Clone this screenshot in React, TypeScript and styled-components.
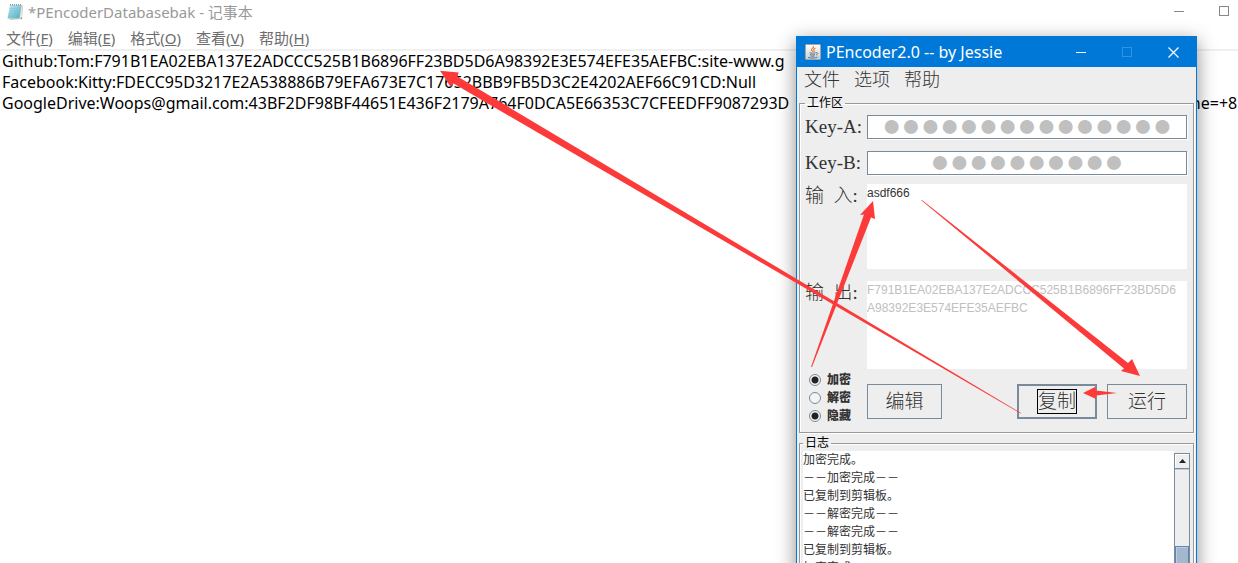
import React from "react";
import styled, { createGlobalStyle, css } from "styled-components";

const Global = createGlobalStyle`
  * { box-sizing: border-box; }
  html, body, #root { height: 100%; }
  body { margin: 0; background: #fff; overflow: hidden; }
  button, input, textarea { margin: 0; }
`;

const ui = `"Noto Sans", "Noto Sans CJK SC", sans-serif`;
const song = `"Liberation Serif", "Noto Sans CJK SC", serif`;
const plain = `"Liberation Sans", "Noto Sans CJK SC", sans-serif`;

const Desktop = styled.div`
  position: relative;
  height: 100%;
  overflow: hidden;
`;

const Notepad = styled.main`
  display: flex;
  flex-direction: column;
  height: 100%;
  background: #fff;
  font-family: ${ui};
`;

const NoteTitleBar = styled.header`
  display: flex;
  flex: none;
  align-items: center;
  gap: 5px;
  height: 23px;
  padding: 0 8px 0 7px;
  color: #999;
  font-size: 15px;
  line-height: 22px;
  white-space: nowrap;
`;

const WindowControls = styled.div<{ $gap: number }>`
  display: flex;
  align-items: center;
  gap: ${(p) => p.$gap}px;
  margin-left: auto;
`;

const WindowButton = styled.button<{ $color: string }>`
  display: flex;
  padding: 0;
  border: 0;
  background: none;
  color: ${(p) => p.$color};
`;

const NoteMenu = styled.nav`
  display: flex;
  flex: none;
  gap: 15px;
  height: 28px;
  padding: 4px 6px 0;
  border-bottom: 2px solid #f0f0f0;
`;

const NoteMenuItem = styled.button`
  padding: 0;
  border: 0;
  background: none;
  color: #6d6d6d;
  font-family: ${ui};
  font-size: 15px;
  line-height: 22px;
  white-space: nowrap;
`;

const NoteText = styled.textarea`
  flex: 1;
  width: 100%;
  padding: 0 2px;
  border: 0;
  outline: 0;
  resize: none;
  overflow: hidden;
  color: #000;
  background: transparent;
  font-family: ${ui};
  font-size: 16px;
  line-height: 21px;
  white-space: pre;
`;

const Encoder = styled.section`
  position: absolute;
  top: 36px;
  right: 41px;
  display: flex;
  flex-direction: column;
  width: 401px;
  height: 100%;
  border: 1px solid #0078d7;
  background: #eee;
  box-shadow: 0 5px 18px rgba(0, 0, 0, 0.45);
  color: #333;
`;

const EncoderTitleBar = styled.header`
  display: flex;
  flex: none;
  align-items: center;
  gap: 5px;
  height: 30px;
  padding: 0 17px 0 8px;
  background: #0078d7;
  color: #fff;
  font-family: ${ui};
  font-size: 16px;
  line-height: 28px;
  white-space: nowrap;
`;

const EncoderMenu = styled.nav`
  display: flex;
  flex: none;
  align-items: flex-start;
  gap: 14px;
  height: 29px;
  padding: 0 7px;
`;

const EncoderMenuItem = styled.button`
  padding: 0;
  border: 0;
  background: none;
  color: #333;
  font-family: ${song};
  font-size: 18px;
  font-weight: 300;
  line-height: 26px;
`;

const Group = styled.fieldset`
  flex: none;
  min-width: 0;
  margin: 0 2px 3px;
  border: 1px solid #999;
  box-shadow: 1px 1px 0 #fff, inset 1px 1px 0 #fff;
`;

const WorkGroup = styled(Group)`
  padding: 5px 6px 7px 5px;
`;

const LogGroup = styled(Group)`
  padding: 1px 3px 3px;
`;

const Legend = styled.legend`
  padding: 0 2px;
  color: #000;
  font-family: ${plain};
  font-size: 12px;
  line-height: 14px;
`;

const Form = styled.form`
  display: grid;
  grid-template-columns: 62px 1fr;
  grid-template-rows: 36px 33px 97px 90px auto;
  align-items: start;
`;

const Label = styled.label`
  font-family: ${song};
  font-size: 19px;
  font-weight: 300;
  line-height: 23px;
  white-space: pre;
`;

const KeyInput = styled.input`
  width: 100%;
  height: 24px;
  padding: 0 0 3px;
  border: 1px solid #7a8a99;
  outline: 0;
  background: #fff;
  box-shadow: 1px 1px 0 #fff;
  color: #c0c0c0;
  font-family: ${plain};
  font-size: 32px;
  line-height: 19px;
  text-align: center;
`;

const TextBox = styled.textarea<{ $muted?: boolean }>`
  display: block;
  width: 100%;
  height: ${(p) => (p.$muted ? 88 : 85)}px;
  padding: 0;
  border: 0;
  outline: 0;
  resize: none;
  overflow: hidden;
  background: #fff;
  color: ${(p) => (p.$muted ? "#c0c0c0" : "#333")};
  font-family: ${plain};
  font-size: 12px;
  line-height: 18px;
  word-break: break-all;
`;

const Modes = styled.div`
  display: flex;
  flex-direction: column;
`;

const Mode = styled.label`
  display: flex;
  align-items: center;
  gap: 6px;
  height: 18px;
  padding-left: 4px;
  font-family: ${plain};
  font-size: 12px;
  font-weight: 900;
  line-height: 18px;
  white-space: nowrap;
`;

const Radio = styled.input`
  appearance: none;
  width: 12px;
  height: 12px;
  border: 1px solid #7a8a99;
  border-radius: 50%;
  background: #f4f4f4;

  &:checked {
    background: radial-gradient(circle, #222 3px, #f4f4f4 4px);
  }
`;

const Actions = styled.div`
  display: flex;
  gap: 10px;
  padding-top: 13px;
`;

const ActionButton = styled.button<{ $focused?: boolean; $first?: boolean }>`
  display: flex;
  align-items: center;
  justify-content: center;
  width: ${(p) => (p.$first ? 75 : 80)}px;
  height: 35px;
  padding: 0;
  border: ${(p) => (p.$focused ? 2 : 1)}px solid #7a8a99;
  background: #eee;
  color: #333;
  font-family: ${song};
  font-size: 19px;
  font-weight: 300;
  line-height: 23px;
  ${(p) => p.$first && css`margin-right: auto;`}
`;

const FocusMark = styled.span`
  border: 1px solid #000;
`;

const LogBody = styled.div`
  display: flex;
`;

const Log = styled.textarea`
  flex: 1;
  height: 180px;
  padding: 0;
  border: 0;
  outline: 0;
  resize: none;
  overflow: hidden;
  background: #fff;
  color: #333;
  font-family: ${plain};
  font-size: 12px;
  line-height: 18px;
  white-space: pre;
`;

const ScrollBar = styled.div`
  display: flex;
  flex-direction: column;
  width: 16px;
  margin-top: 2px;
  border: 1px solid #7a8a99;
  background: #eee;
`;

const ScrollUp = styled.button`
  display: flex;
  align-items: center;
  justify-content: center;
  height: 15px;
  margin-bottom: 77px;
  padding: 0;
  border: 0;
  border-bottom: 1px solid #7a8a99;
  background: #eee;
  box-shadow: inset 1px 1px 0 #fff, 0 1px 0 #b8cfe5;
`;

const Thumb = styled.div`
  flex: 1;
  border: 1px solid #6382bf;
  background: #a3b8cc;
  box-shadow: inset 1px 1px 0 #b8cfe5;
`;

const Arrows = styled.svg`
  position: absolute;
  top: 0;
  right: 0;
  pointer-events: none;
`;

const Glyph = ({ kind }: { kind: "min" | "max" | "close" }) => (
  <svg width="11" height="11" viewBox="0 0 11 11" fill="none" stroke="currentColor">
    {kind === "min" && <path d="M0 5.5h10" />}
    {kind === "max" && <rect x="0.5" y="0.5" width="9" height="9" />}
    {kind === "close" && <path d="M0.5 0.5l10 10M10.5 0.5l-10 10" strokeWidth="1.2" />}
  </svg>
);

const NotepadIcon = () => (
  <svg width="16" height="17" viewBox="0 0 16 17">
    <defs>
      <linearGradient id="sheet" x1="0" y1="0" x2="1" y2="1">
        <stop offset="0" stopColor="#c4edf5" />
        <stop offset="1" stopColor="#48a9c0" />
      </linearGradient>
    </defs>
    <path d="M4 2.5h11.5l-.5 13.5-12 .5z" fill="#9b8a68" />
    <path d="M3 2h12v12l-2 2H1z" fill="#e9e6d5" />
    <path d="M3 2h11.5L12.5 15.5H.5z" fill="url(#sheet)" />
    <path d="M3 5.5h11M2.6 8h11M2.2 10.5h11M1.8 13h11" stroke="#7ac5d5" strokeWidth=".6" />
    <path d="M3.5 1v1.5M5.5 1v1.5M7.5 1v1.5M9.5 1v1.5M11.5 1v1.5M13.5 1v1.5" stroke="#8a989c" />
  </svg>
);

const JavaIcon = () => (
  <svg width="16" height="16" viewBox="0 0 16 16">
    <defs>
      <linearGradient id="tile" x1="0" y1="0" x2="0" y2="1">
        <stop offset="0" stopColor="#fff" />
        <stop offset="1" stopColor="#c9cdd1" />
      </linearGradient>
    </defs>
    <rect x=".5" y=".5" width="15" height="15" rx="1" fill="url(#tile)" stroke="#a9a49e" />
    <path d="M8.5 2c1 2-3 2.8-2 4.3.4.7 1 1 1.2 1.5M10.5 4c-1.500.8-2.5 1.5-1.5 2.6.5.6.2 1-.2 1.4" fill="none" stroke="#e8772a" strokeWidth="1.1" />
    <path d="M4.500 8.7c1.5.7 4.5.6 6 0M5 10.5c1.5.6 3.5.6 5 0M5.5 12c1.2.4 2.8.4 4 0M3 13.3c2.5 1.1 7 1.1 9.5-.2M10.8 8.7c2.500-.6 2.3 1.6.2 2.4" fill="none" stroke="#426c94" strokeWidth=".9" />
  </svg>
);

const noteLines = [
  "Github:Tom:F791B1EA02EBA137E2ADCCC525B1B6896FF23BD5D6A98392E3E574EFE35AEFBC:site-www.g",
  "Facebook:Kitty:FDECC95D3217E2A538886B79EFA673E7C17652BBB9FB5D3C2E4202AEF66C91CD:Null",
  "GoogleDrive:Woops@gmail.com:43BF2DF98BF44651E436F2179A764F0DCA5E66353C7CFEEDFF9087293D   8A41C07E52B9D6F3A7E1:site-drive.google.com,phone=+8",
].join("\n");

const logLines = [
  "加密完成。",
  "－－加密完成－－",
  "已复制到剪辑板。",
  "－－解密完成－－",
  "－－解密完成－－",
  "已复制到剪辑板。",
  "加密完成。",
].join("\n");

const noteMenus = [
  ["文件", "F"],
  ["编辑", "E"],
  ["格式", "O"],
  ["查看", "V"],
  ["帮助", "H"],
];

const modes = [
  { name: "加密", group: "direction", on: true },
  { name: "解密", group: "direction", on: false },
  { name: "隐藏", group: "visibility", on: true },
];

export default function App() {
  return (
    <Desktop>
      <Global />
      <Notepad>
        <NoteTitleBar>
          <NotepadIcon />
          *PEncoderDatabasebak - 记事本
          <WindowControls $gap={34}>
            <WindowButton $color="#888" aria-label="最小化"><Glyph kind="min" /></WindowButton>
            <WindowButton $color="#888" aria-label="最大化"><Glyph kind="max" /></WindowButton>
          </WindowControls>
        </NoteTitleBar>
        <NoteMenu>
          {noteMenus.map(([name, key]) => (
            <NoteMenuItem key={key}>{name}(<u>{key}</u>)</NoteMenuItem>
          ))}
        </NoteMenu>
        <NoteText aria-label="文本" defaultValue={noteLines} spellCheck={false} />
      </Notepad>

      <Encoder>
        <EncoderTitleBar>
          <JavaIcon />
          PEncoder2.0 -- by Jessie
          <WindowControls $gap={35}>
            <WindowButton $color="#fff" aria-label="最小化"><Glyph kind="min" /></WindowButton>
            <WindowButton $color="#3393df" aria-label="最大化" disabled><Glyph kind="max" /></WindowButton>
            <WindowButton $color="#fff" aria-label="关闭"><Glyph kind="close" /></WindowButton>
          </WindowControls>
        </EncoderTitleBar>
        <EncoderMenu>
          <EncoderMenuItem>文件</EncoderMenuItem>
          <EncoderMenuItem>选项</EncoderMenuItem>
          <EncoderMenuItem>帮助</EncoderMenuItem>
        </EncoderMenu>
        <WorkGroup>
          <Legend>工作区</Legend>
          <Form>
            <Label htmlFor="key-a">Key-A:</Label>
            <KeyInput id="key-a" defaultValue={"●".repeat(15)} />
            <Label htmlFor="key-b">Key-B:</Label>
            <KeyInput id="key-b" defaultValue={"●".repeat(10)} />
            <Label htmlFor="source">{"输  入:"}</Label>
            <TextBox id="source" defaultValue="asdf666" spellCheck={false} />
            <Label htmlFor="result">{"输  出:"}</Label>
            <TextBox
              id="result"
              $muted
              readOnly
              spellCheck={false}
              value={"F791B1EA02EBA137E2ADCCC525B1B6896FF23BD5D6\nA98392E3E574EFE35AEFBC"}
            />
            <Modes>
              {modes.map((m) => (
                <Mode key={m.name}>
                  <Radio type="radio" name={m.group} defaultChecked={m.on} />
                  {m.name}
                </Mode>
              ))}
            </Modes>
            <Actions>
              <ActionButton type="button" $first>编辑</ActionButton>
              <ActionButton type="button" $focused><FocusMark>复制</FocusMark></ActionButton>
              <ActionButton type="button">运行</ActionButton>
            </Actions>
          </Form>
        </WorkGroup>
        <LogGroup>
          <Legend>日志</Legend>
          <LogBody>
            <Log aria-label="日志" readOnly value={logLines} />
            <ScrollBar>
              <ScrollUp aria-label="向上滚动">
                <svg width="7" height="4" viewBox="0 0 7 4"><path d="M3.5 0L7 4H0z" fill="#222" /></svg>
              </ScrollUp>
              <Thumb />
            </ScrollBar>
          </LogBody>
        </LogGroup>
      </Encoder>

      <Arrows width="1238" height="563" viewBox="0 0 1238 563" fill="#fd3a3a" aria-hidden="true">
        <path d="M811 367L864 214.5L860 215L873 201L875 219L871 217.5L812 367z" />
        <path d="M922 200L1128 363L1132 359L1140 376L1121 371L1124 368.5L921.5 200.5z" />
        <path d="M1021 413L457.5 76.5L458.7 72.5L440 70.7L450.7 87L453.5 83.5L1020.5 413.5z" />
        <path d="M1117 393L1096 390.5L1095 387L1083 393L1096 399L1096 395.5z" />
      </Arrows>
    </Desktop>
  );
}
